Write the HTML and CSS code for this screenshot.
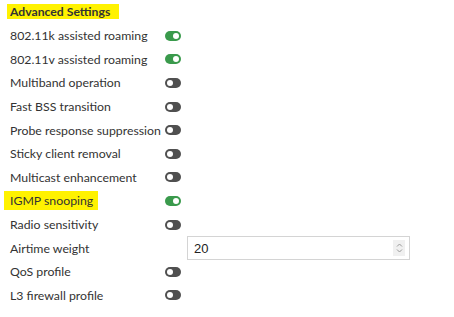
FILE: index.html
```html
<!DOCTYPE html>
<html lang="en">
  <head>
    <meta charset="UTF-8" />
    <meta name="viewport" content="width=device-width, initial-scale=1.0" />
    <title>Advanced Settings</title>
    <link rel="stylesheet" href="styles.css">
  </head>
  <body>
    <div class="settings">
      <h2 class="title"><span class="mark">Advanced Settings</span></h2>

      <div class="row">
        <span class="label">802.11k assisted roaming</span>
        <span class="toggle on"></span>
      </div>
      <div class="row">
        <span class="label">802.11v assisted roaming</span>
        <span class="toggle on"></span>
      </div>
      <div class="row">
        <span class="label">Multiband operation</span>
        <span class="toggle"></span>
      </div>
      <div class="row">
        <span class="label">Fast BSS transition</span>
        <span class="toggle"></span>
      </div>
      <div class="row">
        <span class="label">Probe response suppression</span>
        <span class="toggle"></span>
      </div>
      <div class="row">
        <span class="label">Sticky client removal</span>
        <span class="toggle"></span>
      </div>
      <div class="row">
        <span class="label">Multicast enhancement</span>
        <span class="toggle"></span>
      </div>
      <div class="row">
        <span class="label"><span class="mark small">IGMP snooping</span></span>
        <span class="toggle on"></span>
      </div>
      <div class="row">
        <span class="label">Radio sensitivity</span>
        <span class="toggle"></span>
      </div>
      <div class="row">
        <span class="label">Airtime weight</span>
        <div class="number">
          <span class="value">20</span>
          <span class="spin">
            <svg width="7" height="12" viewBox="0 0 7 12">
              <path d="M1 4.5 L3.5 2 L6 4.5 M1 7.5 L3.5 10 L6 7.5" fill="none" stroke="#9a9a9a" stroke-width="1"/>
            </svg>
          </span>
        </div>
      </div>
      <div class="row">
        <span class="label">QoS profile</span>
        <span class="toggle"></span>
      </div>
      <div class="row">
        <span class="label">L3 firewall profile</span>
        <span class="toggle"></span>
      </div>
    </div>
  </body>
</html>
```

FILE: styles.css
```css
body {
  margin: 0;
  background: #ffffff;
  font-family: "Lato", "Liberation Sans", sans-serif;
  color: #333333;
}

.settings {
  padding: 4px 0 0 10px;
}

.title {
  margin: 0 0 5px 0;
  font-size: 12.2px;
  font-weight: bold;
  line-height: 15px;
}

.mark {
  display: inline-block;
  background: #fff200;
  margin-left: -3px;
  padding: 0 9px 0 3px;
}

.mark.small {
  margin-left: -6px;
  padding: 2px 5px 2px 6px;
  line-height: 15px;
}

.row {
  display: grid;
  grid-template-columns: 155px 1fr;
  align-items: center;
  height: 23.6px;
  font-size: 12.3px;
}

.label {
  white-space: nowrap;
}

.toggle {
  position: relative;
  width: 16px;
  height: 10px;
  border-radius: 5px;
  background: #505050;
}

.toggle::after {
  content: "";
  position: absolute;
  top: 2px;
  left: 2px;
  width: 6px;
  height: 6px;
  border-radius: 50%;
  background: #ffffff;
}

.toggle.on {
  background: #3a9a4c;
}

.toggle.on::after {
  left: 8px;
}

.number {
  display: flex;
  align-items: center;
  justify-content: space-between;
  box-sizing: border-box;
  width: 223px;
  height: 24px;
  margin-left: 22px;
  padding: 0 4px 0 6px;
  border: 1px solid #d4d4d4;
  font-family: "Liberation Sans", sans-serif;
  font-size: 13px;
  color: #222222;
}

.spin {
  display: flex;
  align-items: center;
  justify-content: center;
  width: 12px;
  height: 16px;
  background: #f0f0f0;
}
```
